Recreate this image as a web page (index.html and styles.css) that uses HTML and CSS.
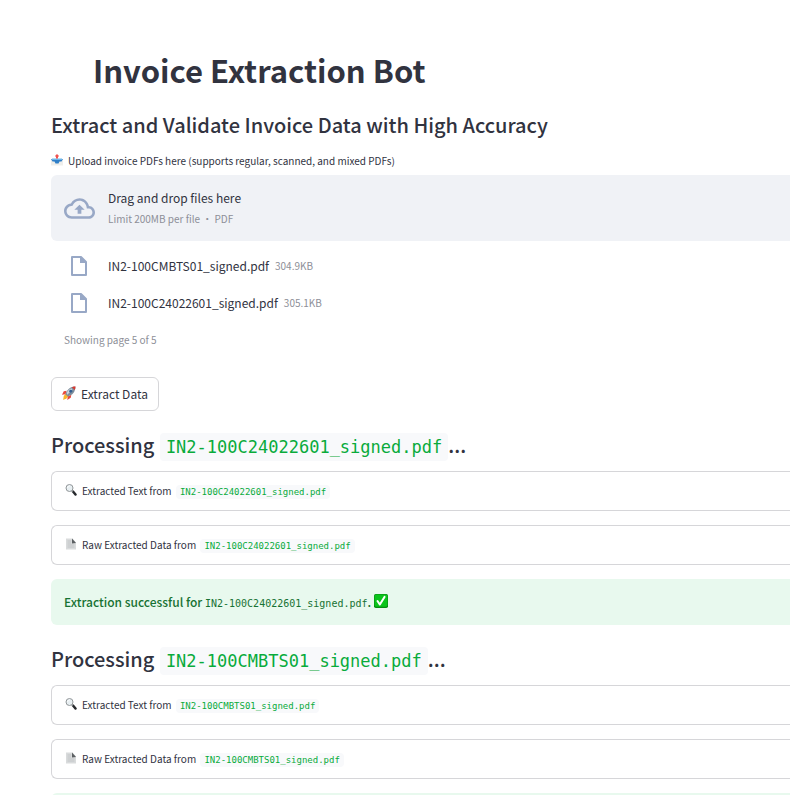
FILE: index.html
```html
<!DOCTYPE html>
<html lang="en">
<head>
<meta charset="utf-8">
<title>Invoice Extraction Bot</title>
<link rel="stylesheet" href="styles.css">
</head>
<body>
<svg class="sprite" aria-hidden="true">
  <symbol id="outbox" viewBox="0 0 24 24">
    <path fill="#eeeeeb" d="M0 12h24v11H0z"/>
    <path fill="#2f7fc8" d="M0 10h24l-3 5h-4l-2 4H9l-2-4H3z"/>
    <path fill="#6db6ea" d="M2 9h20v3H2z"/>
    <path fill="#ef5350" d="M12 0l4 4-2 2v3h-4V6L8 4z"/>
  </symbol>
  <symbol id="rocket" viewBox="0 0 24 24">
    <path fill="#f9b52c" d="M7 12l5 5-4 4-6 3 1-7z"/>
    <path fill="#e8483a" d="M8 8L3 9l-3 6 6-1zM16 15l-1 5-6 4 1-6z"/>
    <path fill="#7d8d9b" d="M6 14C8 7 14 1 23 1c0 9-5 15-13 17z"/>
    <path fill="#d9382e" d="M17 2c2-1 4-1 6-1 0 2 0 4-1 6z"/>
    <path fill="#c9d4dc" d="M8 12c2-4 5-7 8-8l2 2-9 9z"/>
    <circle cx="15" cy="9" r="2.500" fill="#315d91"/>
  </symbol>
  <symbol id="lens" viewBox="0 0 24 24">
    <path stroke="#26292c" stroke-width="5" stroke-linecap="round" d="M16 15l5 6"/>
    <path stroke="#777c80" stroke-width="2" d="M13 13l3 3"/>
    <circle cx="9" cy="8" r="7" fill="#e8eff2" stroke="#929799" stroke-width="2"/>
    <path fill="none" stroke="#fff" stroke-width="2" d="M5 8c0-2 2-4 4-4"/>
  </symbol>
  <symbol id="sheet" viewBox="0 0 24 24">
    <path fill="#d9dbdc" d="M2 1h13l7 8v14H2z"/>
    <path fill="#5c6063" d="M14 1l8 9-8 1z"/>
    <path fill="none" stroke="#c2c5c7" stroke-width="2" d="M5 6h7M5 10h7M5 14h14M5 18h14"/>
  </symbol>
  <symbol id="check" viewBox="0 0 24 24">
    <rect width="24" height="24" rx="3" fill="#078c12"/>
    <rect x="1" y="1" width="22" height="21" rx="3" fill="#0bc41b"/>
    <path fill="none" stroke="#fff" stroke-width="3.500" stroke-linecap="round" stroke-linejoin="round" d="M6 12l4 6 8-13"/>
  </symbol>
</svg>
<main class="page">
  <h1 class="title">Invoice Extraction Bot</h1>
  <h2 class="heading subtitle">Extract and Validate Invoice Data with High Accuracy</h2>

  <section class="uploader">
    <label class="upload-label" for="pdfs"><svg class="emoji" aria-hidden="true"><use href="#outbox"/></svg>Upload invoice PDFs here (supports regular, scanned, and mixed PDFs)</label>
    <label class="dropzone" for="pdfs">
      <svg class="cloud" viewBox="0 0 24 24" aria-hidden="true"><path d="M19.35 10.04C18.67 6.59 15.64 4 12 4 9.11 4 6.6 5.64 5.35 8.04 2.34 8.36 0 10.91 0 14c0 3.31 2.69 6 6 6h13c2.76 0 5-2.24 5-5 0-2.64-2.05-4.78-4.65-4.96zM19 18H6c-2.21 0-4-1.79-4-4 0-2.05 1.53-3.76 3.56-3.97l1.07-.11.5-.95C8.08 7.14 9.94 6 12 6c2.62 0 4.88 1.86 5.39 4.43l.3 1.5 1.53.11c1.56.1 2.78 1.41 2.78 2.96 0 1.65-1.35 3-3 3zM8 13h2.55v3h2.9v-3H16l-4-4z"/></svg>
      <span class="drop-copy">
        <span class="drop-title">Drag and drop files here</span>
        <span class="muted">Limit 200MB per file • PDF</span>
      </span>
    </label>
    <input class="file-input" id="pdfs" type="file" accept=".pdf" multiple>
    <ul class="files">
      <li class="file">
        <svg class="file-icon" viewBox="0 0 18 22" aria-hidden="true"><path class="outline" d="M2 2h9l5 5v13H2z"/><path class="fold" d="M10 1v7h7z"/></svg>
        <span class="file-name">IN2-100CMBTS01_signed.pdf</span>
        <span class="muted">304.9KB</span>
      </li>
      <li class="file">
        <svg class="file-icon" viewBox="0 0 18 22" aria-hidden="true"><path class="outline" d="M2 2h9l5 5v13H2z"/><path class="fold" d="M10 1v7h7z"/></svg>
        <span class="file-name">IN2-100C24022601_signed.pdf</span>
        <span class="muted">305.1KB</span>
      </li>
    </ul>
    <p class="pager muted">Showing page 5 of 5</p>
  </section>

  <button class="extract" type="button"><svg class="emoji" aria-hidden="true"><use href="#rocket"/></svg>Extract Data</button>

  <section class="result">
    <h2 class="heading">Processing <code class="chip">IN2-100C24022601_signed.pdf</code>...</h2>
    <details class="panel"><summary><svg class="emoji" aria-hidden="true"><use href="#lens"/></svg>Extracted Text from <code class="chip">IN2-100C24022601_signed.pdf</code></summary></details>
    <details class="panel"><summary><svg class="emoji" aria-hidden="true"><use href="#sheet"/></svg>Raw Extracted Data from <code class="chip">IN2-100C24022601_signed.pdf</code></summary></details>
    <p class="success">Extraction successful for <code>IN2-100C24022601_signed.pdf</code>.<svg class="emoji tick" role="img"><use href="#check"/></svg></p>
  </section>

  <section class="result">
    <h2 class="heading">Processing <code class="chip">IN2-100CMBTS01_signed.pdf</code>...</h2>
    <details class="panel"><summary><svg class="emoji" aria-hidden="true"><use href="#lens"/></svg>Extracted Text from <code class="chip">IN2-100CMBTS01_signed.pdf</code></summary></details>
    <details class="panel"><summary><svg class="emoji" aria-hidden="true"><use href="#sheet"/></svg>Raw Extracted Data from <code class="chip">IN2-100CMBTS01_signed.pdf</code></summary></details>
    <p class="success"></p>
  </section>
</main>
</body>
</html>
```

FILE: styles.css
```css
* { box-sizing: border-box; }

body {
  margin: 0;
  background: #fff;
  color: #31333f;
  font: 12px/20px "Noto Sans CJK SC", "Noto Sans", sans-serif;
}

h1, h2, p, ul { margin: 0; padding: 0; }

code {
  font-family: "DejaVu Sans Mono", monospace;
  font-weight: 400;
  line-height: 1;
}

.sprite { display: none; }

.page {
  height: 100vh;
  padding: 45px 0 0 51px;
  overflow: hidden;
}

.title {
  margin-left: 42px;
  font-size: 31px;
  font-weight: 700;
  line-height: 50px;
}

.heading {
  font-size: 20px;
  font-weight: 500;
  line-height: 28px;
}

.subtitle { margin-top: 16px; }

.upload-label {
  display: block;
  margin-top: 12px;
  font-size: 10px;
  line-height: 20px;
}

.emoji {
  width: 12px;
  height: 12px;
  margin-right: 5px;
  vertical-align: -1px;
}

.dropzone {
  display: flex;
  align-items: center;
  gap: 13px;
  height: 66px;
  margin-top: 4px;
  padding: 0 13px;
  border-radius: 6px 0 0 6px;
  background: #f0f2f6;
}

.cloud { width: 31px; height: 31px; fill: #98a8c6; }

.drop-copy { display: flex; flex-direction: column; gap: 1px; }

.muted { color: #8d8f98; font-size: 10px; }

.file-input {
  position: absolute;
  width: 1px;
  height: 1px;
  opacity: 0;
}

.files {
  padding: 6px 19px 0;
  list-style: none;
}

.file { display: flex; align-items: center; height: 37px; }

.file-icon { width: 18px; height: 22px; margin-right: 20px; }

.outline { fill: none; stroke: #98a8c6; stroke-width: 2; stroke-linejoin: round; }

.fold { fill: #98a8c6; }

.file-name { margin-right: 6px; }

.pager { padding: 9px 13px 0; }

.extract {
  display: block;
  height: 34px;
  margin-top: 27px;
  padding: 0 10px;
  border: 1px solid #d6d6d9;
  border-radius: 6px;
  background: #fff;
  color: inherit;
  font: inherit;
}

.extract .emoji { width: 14px; height: 14px; }

.result { padding-top: 20px; }

.chip {
  margin-left: 1px;
  padding: 4px 6px;
  border-radius: 4px;
  background: #f8f9fb;
  color: #09ab3b;
}

.heading .chip { font-size: 17px; }

.result .heading { margin-bottom: 12px; }

.panel {
  height: 40px;
  margin-bottom: 14px;
  padding: 9px 13px;
  border: 1px solid #d6d6d9;
  border-right: 0;
  border-radius: 6px 0 0 6px;
  font-size: 10px;
}

.panel summary { list-style: none; }

.panel .chip { margin-left: 2px; padding: 2px 4px; font-size: 9px; }

.success {
  height: 46px;
  padding: 13px;
  border-radius: 6px 0 0 6px;
  background: #e8f9ee;
  color: #177233;
  font-weight: 500;
}

.success code { font-size: 10px; }

.tick { width: 14px; height: 14px; margin-left: 3px; }
```
